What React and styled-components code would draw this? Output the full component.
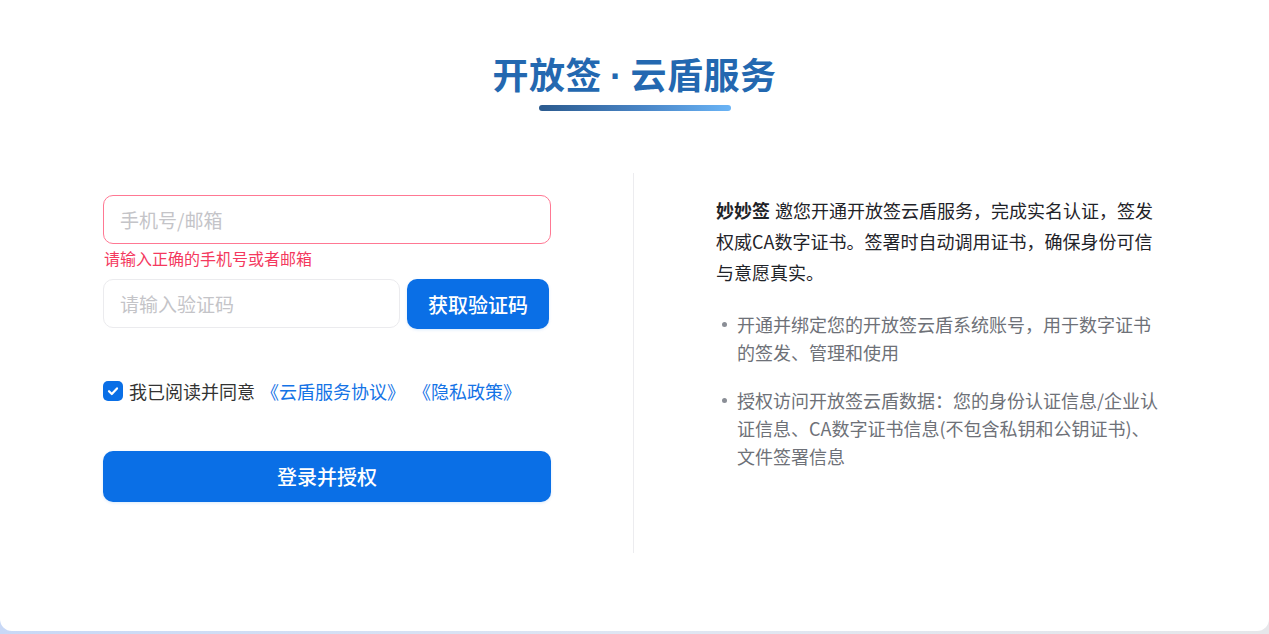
import React from "react";
import styled, {createGlobalStyle} from "styled-components";

const GlobalStyle = createGlobalStyle`
  * {
    box-sizing: border-box;
  }
  body {
    margin: 0;
    background: linear-gradient(90deg, #c8d8f6 0%, #dfe6f3 50%, #e6e7ea 100%);
    font-family: "Noto Sans CJK SC", "Noto Sans", sans-serif;
  }
`;

const Card = styled.div`
  height: 631px;
  background: #fff;
  border-radius: 0 0 12px 12px;
  padding-top: 48px;
  display: flex;
  flex-direction: column;
  align-items: center;
`;

const Title = styled.h1`
  margin: 0;
  font-size: 36px;
  line-height: 50px;
  font-weight: 700;
  color: #2368b0;
  letter-spacing: 0.5px;
`;

const Dot = styled.span`
  font-family: "Liberation Sans", Arial, sans-serif;
  margin: 0 8px;
`;

const TitleBar = styled.div`
  margin-top: 3px;
  width: 192px;
  height: 6px;
  border-radius: 3px;
  background: linear-gradient(90deg, #2b5a8e 0%, #4a86c7 55%, #6ab4f6 100%);
`;

const Columns = styled.div`
  margin-top: 62px;
  display: flex;
  align-items: stretch;
`;

const LeftPane = styled.div`
  width: 448px;
  padding: 22px 0 51px;
  margin-right: 82px;
  display: flex;
  flex-direction: column;
`;

const RightPane = styled.div`
  width: 533px;
  padding: 22px 0 0 82px;
  border-left: 1px solid #ececef;
`;

const Input = styled.input`
  height: 49px;
  width: ${p => p.$width || "100%"};
  padding: 0 16px;
  border: 1px solid ${p => (p.$error ? "#ff7893" : "#ebebee")};
  border-radius: 10px;
  font-family: inherit;
  font-size: 19px;
  color: #333;
  outline: none;
  background: #fff;

  &::placeholder {
    color: #c4c4c8;
  }
`;

const ErrorText = styled.div`
  margin-top: 3px;
  padding-left: 1px;
  font-size: 16px;
  line-height: 22px;
  color: #f4395e;
`;

const CodeRow = styled.div`
  margin-top: 10px;
  display: flex;
  gap: 7px;
`;

const PrimaryButton = styled.button`
  height: ${p => p.$height || 50}px;
  width: ${p => p.$width || "100%"};
  margin-top: ${p => p.$top || 0}px;
  flex-shrink: 0;
  border: none;
  border-radius: 10px;
  background: #0a6fe6;
  color: #fff;
  font-family: inherit;
  font-size: 20px;
  font-weight: 500;
  cursor: pointer;
  box-shadow: 0 1px 3px rgba(10, 111, 230, 0.15);
`;

const AgreeRow = styled.label`
  margin-top: 50px;
  display: flex;
  align-items: center;
  font-size: 18px;
  line-height: 24px;
  color: #333;
`;

const CheckBox = styled.span`
  width: 20px;
  height: 20px;
  margin-right: 6px;
  border-radius: 5px;
  background: #0a6fe6;
  display: inline-flex;
  align-items: center;
  justify-content: center;
`;

const Link = styled.a`
  color: #1473e6;
  text-decoration: none;
  margin-left: ${p => p.$gap || 0}px;
`;

const Intro = styled.p`
  margin: 0;
  width: 444px;
  font-size: 18px;
  line-height: 31px;
  color: #1f2329;
`;

const Brand = styled.b`
  font-weight: 700;
  margin-right: 5px;
`;

const List = styled.ul`
  margin: 22px 0 0;
  padding: 0;
  width: 444px;
  list-style: none;
  display: flex;
  flex-direction: column;
  gap: 20px;
`;

const Item = styled.li`
  position: relative;
  padding-left: 21px;
  font-size: 18px;
  line-height: 28px;
  color: #6e7178;

  &::before {
    content: "";
    position: absolute;
    left: 6px;
    top: 12px;
    width: 5px;
    height: 5px;
    border-radius: 50%;
    background: #8a8e96;
  }
`;

const Check = () => (
    <svg width="14" height="14" viewBox="0 0 14 14" fill="none">
        <path d="M3 7.2 L5.8 10 L11 4.4" stroke="#fff" strokeWidth="2.2" strokeLinecap="round" strokeLinejoin="round"/>
    </svg>
);

const App = () => {
    return (
        <>
            <GlobalStyle/>
            <Card>
                <Title>开放签<Dot>·</Dot>云盾服务</Title>
                <TitleBar/>
                <Columns>
                    <LeftPane>
                        <Input $error placeholder="手机号/邮箱"/>
                        <ErrorText>请输入正确的手机号或者邮箱</ErrorText>
                        <CodeRow>
                            <Input $width="297px" placeholder="请输入验证码"/>
                            <PrimaryButton $width="142px">获取验证码</PrimaryButton>
                        </CodeRow>
                        <AgreeRow>
                            <CheckBox><Check/></CheckBox>
                            我已阅读并同意
                            <Link href="#" $gap={6}>《云盾服务协议》</Link>
                            <Link href="#" $gap={8}>《隐私政策》</Link>
                        </AgreeRow>
                        <PrimaryButton $height={51} $top={48}>登录并授权</PrimaryButton>
                    </LeftPane>
                    <RightPane>
                        <Intro>
                            <Brand>妙妙签</Brand>邀您开通开放签云盾服务，完成实名认证，签发权威CA数字证书。签署时自动调用证书，确保身份可信与意愿真实。
                        </Intro>
                        <List>
                            <Item>开通并绑定您的开放签云盾系统账号，用于数字证书的签发、管理和使用</Item>
                            <Item>授权访问开放签云盾数据：您的身份认证信息/企业认证信息、CA数字证书信息(不包含私钥和公钥证书)、文件签署信息</Item>
                        </List>
                    </RightPane>
                </Columns>
            </Card>
        </>
    );
};

export default App;
